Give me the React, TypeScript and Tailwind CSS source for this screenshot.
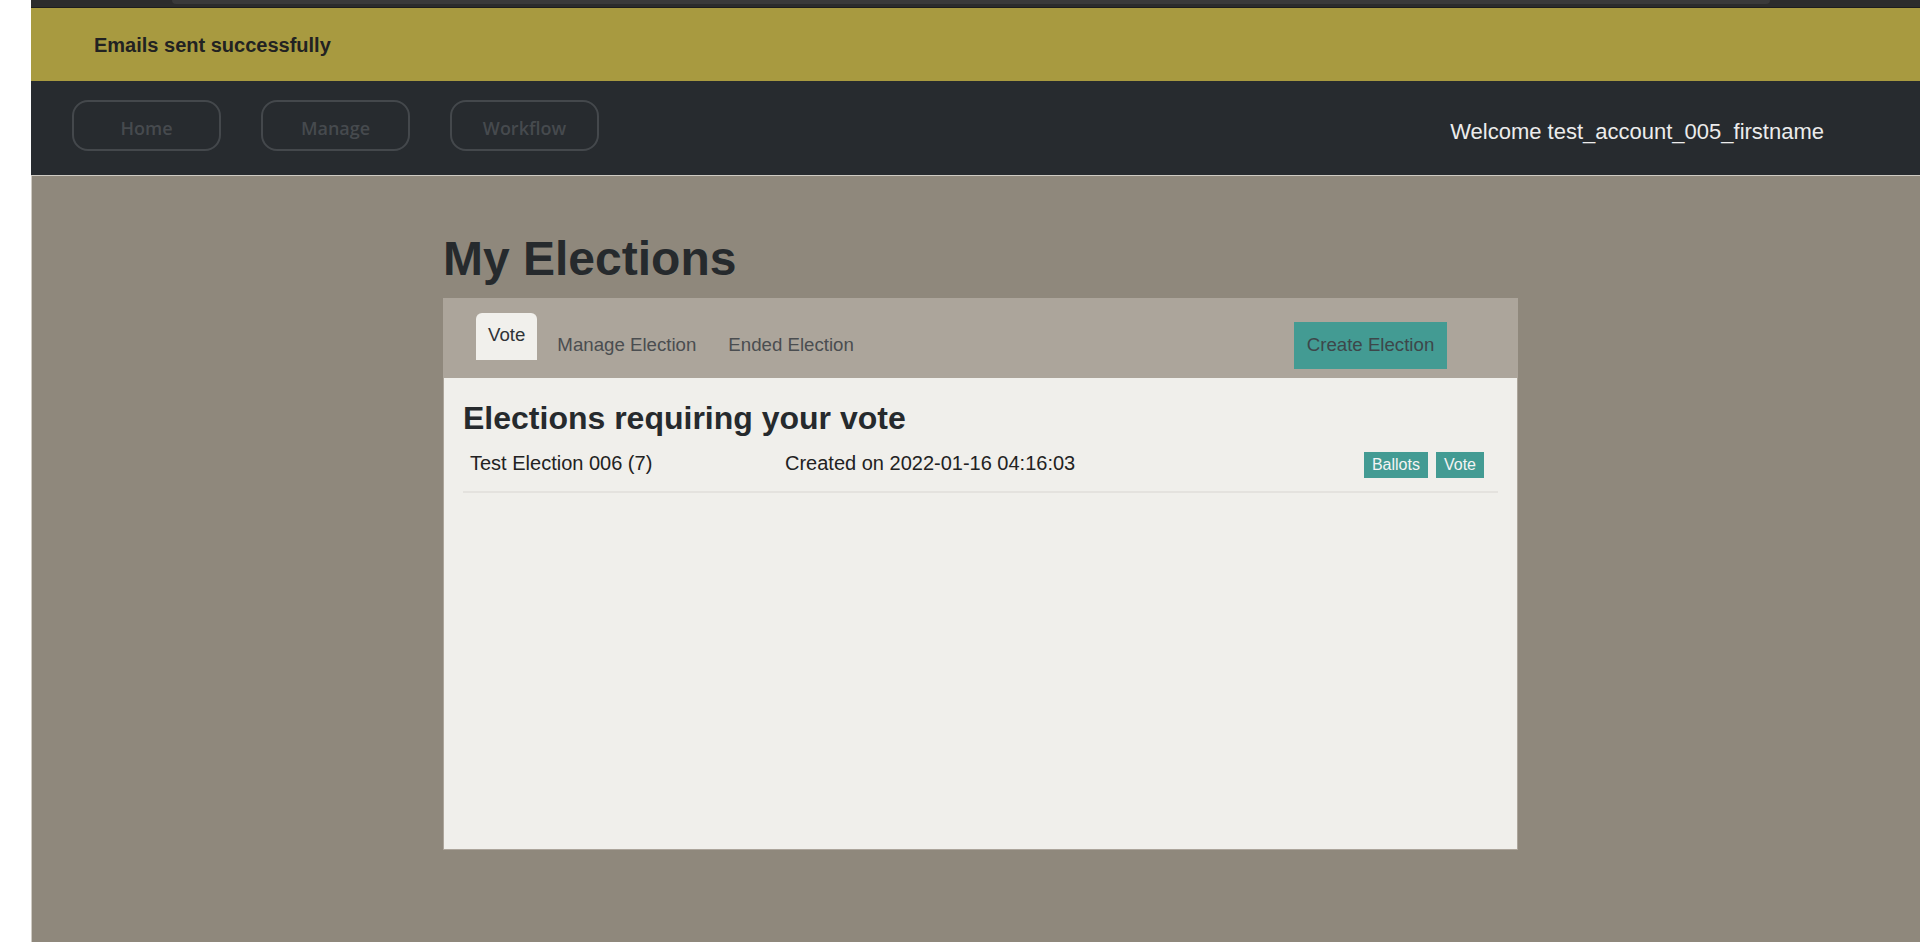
import React from "react";

const sans = { fontFamily: '"Liberation Sans", Arial, sans-serif' };

export default function App() {
  return (
    <div
      className="flex w-[1920px] h-[942px] overflow-hidden bg-white"
      style={sans}
    >
      <div className="w-[31px] shrink-0 bg-white" />
      <div className="flex flex-col flex-1 min-w-0">
        {/* top browser-ish strip */}
        <div className="h-[8px] bg-[#2c2c2c] border-b border-[#1d1d1d]">
          <div className="ml-[141px] w-[1598px] h-[4px] rounded-b-[4px] bg-[#3a3a3a]" />
        </div>

        {/* flash banner */}
        <div className="h-[73px] bg-[#a89a40] flex items-center pl-[63px]">
          <span className="text-[20px] leading-[24px] font-bold text-[#222222]">
            Emails sent successfully
          </span>
        </div>

        {/* nav */}
        <div className="h-[94px] bg-[#272b2f] flex items-start">
          <div className="flex gap-[40px] pl-[41px] pt-[19px]">
            {["Home", "Manage", "Workflow"].map((t) => (
              <div
                key={t}
                className="w-[149px] h-[51px] rounded-[16px] border-2 border-[#44484c] flex items-center justify-center pt-[5px] text-[18px] font-semibold text-[#464a4e]"
                style={{ fontFamily: '"Open Sans", "Noto Sans", sans-serif' }}
              >
                {t}
              </div>
            ))}
          </div>
          <div className="ml-auto mr-[96px] mt-[40px] text-[22px] leading-[22px] text-[#ececec]">
            Welcome test_account_005_firstname
          </div>
        </div>

        {/* main */}
        <div className="flex-1 bg-[#8f887c] border-t border-l border-[#cfcbc3] pt-[54px]">
          <div className="ml-[411px] w-[1075px]">
            <h1 className="text-[48px] leading-[1.2] font-bold text-[#262a2d] mb-[10px]">
              My Elections
            </h1>
            <div className="h-[552px] bg-[#aca59b] flex flex-col">
              <div className="h-[80px] flex justify-between pl-[33px] pr-[71px]">
                <div className="h-[62px] flex items-end gap-[8px] text-[18.67px] leading-[28px]">
                  <div className="px-3 pt-[8px] pb-[11px] rounded-t-[6px] bg-[#f1f0ec] text-[#2f3337]">
                    Vote
                  </div>
                  <div className="px-3 pb-[1px] text-[#4a4d50]">Manage Election</div>
                  <div className="px-3 pb-[1px] text-[#4a4d50]">Ended Election</div>
                </div>
                <div className="mt-[24px] h-[47px] w-[153px] bg-[#439b93] flex items-center justify-center text-[18.67px] text-[#3d474a]">
                  Create Election
                </div>
              </div>
              <div className="flex-1 mx-[1px] mb-[1px] bg-[#f0efeb] px-[19px] pt-[21px]">
                <h2 className="text-[32px] leading-[1.2] font-bold text-[#262a2d]">
                  Elections requiring your vote
                </h2>
                <div className="mt-[11px] flex items-start pl-[7px] pr-[14px] pb-[13px] border-b-2 border-[#e4e2de] text-[20px] leading-[30px] text-[#222222]">
                  <span className="w-[315px]">Test Election 006 (7)</span>
                  <span>Created on 2022-01-16 04:16:03</span>
                  <div className="ml-auto flex gap-[8px] mt-[4px]">
                    <span className="h-[26px] px-2 text-[16px] leading-[26px] bg-[#439b93] text-[#f4f4f4]">
                      Ballots
                    </span>
                    <span className="h-[26px] px-2 text-[16px] leading-[26px] bg-[#439b93] text-[#f4f4f4]">
                      Vote
                    </span>
                  </div>
                </div>
              </div>
            </div>
          </div>
        </div>
      </div>
    </div>
  );
}
